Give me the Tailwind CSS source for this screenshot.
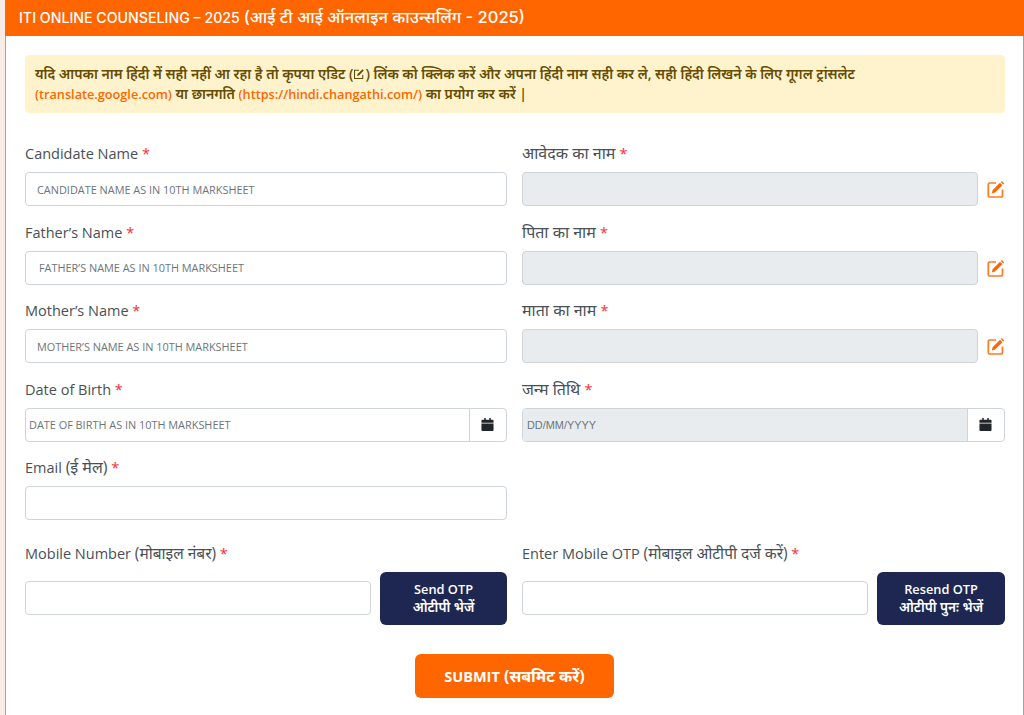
<!DOCTYPE html>
<html lang="hi">

<head>
    <meta charset="UTF-8">
    <title>ITI Online Counseling</title>
    <script src="https://cdn.jsdelivr.net/npm/@tailwindcss/browser@4"></script>
</head>

<body class="bg-[#f9ece4] h-[715px] overflow-hidden pl-[5px] font-['Open_Sans','Noto_Sans','Noto_Sans_Devanagari',sans-serif]">
    <div class="bg-white border-x border-[#ff8a3d] h-[715px]">
        <div class="bg-[#ff6600] h-[36px] -mx-px pl-[14px] pb-[1px] flex items-center text-white text-[14.2px] font-medium font-['Inter','Noto_Sans',sans-serif] whitespace-pre">ITI ONLINE COUNSELING – 2025 <span class="text-[16.5px]">(आई टी आई ऑनलाइन काउन्सलिंग - 2025)</span></div>

        <div class="pl-[19px] pr-[18px] pt-[19px]">
            <div class="bg-[#fff3cd] rounded h-[58px] px-[10px] pt-[9px] text-[14px] leading-[20px] font-semibold text-[#664d03]">
                <div class="h-[20px] whitespace-nowrap">यदि आपका नाम हिंदी में सही नहीं आ रहा है तो कृपया एडिट (<svg class="inline w-3 h-3 align-[-1px]" viewBox="0 0 16 16" fill="none" stroke="#664d03" stroke-width="1.4"><path d="M13 9v5H2V3h6"/><path d="M5.5 10.5l.6-2.4L12.6 1.6l1.8 1.8-6.5 6.5z" fill="#664d03" stroke="none"/></svg>) लिंक को क्लिक करें और अपना हिंदी नाम सही कर ले, सही हिंदी लिखने के लिए गूगल ट्रांसलेट</div>
                <div class="h-[20px] whitespace-nowrap"><span class="text-[#ff6600] text-[12.7px]">(translate.google.com)</span> या छानगति <span class="text-[#ff6600] text-[12.7px]">(https://hindi.changathi.com/)</span> का प्रयोग कर करें |</div>
            </div>

            <div class="grid grid-cols-[482px_483px] gap-x-[15px] mt-[28px]">
                <!-- name rows -->
                <div class="h-[78.5px]">
                    <label class="block text-[14.5px] leading-[24px] text-[#495057] h-[31px] pt-[1px]">Candidate Name <span class="text-red-500">*</span></label>
                    <div class="border border-[#ced4da] rounded h-[34px] flex items-center pl-[11px] pt-[2px] text-[10.9px] text-[#6c757d]">CANDIDATE NAME AS IN 10TH MARKSHEET</div>
                </div>
                <div class="h-[78.5px]">
                    <label class="block text-[16px] leading-[24px] text-[#495057] h-[31px]">आवेदक का नाम <span class="text-red-500 text-[14.5px]">*</span></label>
                    <div class="flex items-center">
                        <div class="bg-[#e9ecef] border border-[#ced4da] rounded h-[34px] w-[456px]"></div>
                        <svg class="ml-[9px] w-[18px] h-[18px]" viewBox="0 0 18 18" fill="none"><path d="M15.5 9.5v6a1.5 1.5 0 0 1-1.5 1.5H2.8a1.5 1.5 0 0 1-1.5-1.5V4.5A1.5 1.5 0 0 1 2.8 3H9" stroke="#ff7a20" stroke-width="1.7"/><path d="M4.8 13.4l.8-3.2 7.4-7.4 2.4 2.4-7.4 7.4zM13.8 2l1-1 2.4 2.4-1 1z" fill="#ff6600"/></svg>
                    </div>
                </div>

                <div class="h-[78.5px]">
                    <label class="block text-[14.5px] leading-[24px] text-[#495057] h-[31px] pt-[1px]">Father’s Name <span class="text-red-500">*</span></label>
                    <div class="border border-[#ced4da] rounded h-[34px] flex items-center pl-[13px] pt-[2px] text-[10.9px] text-[#6c757d]">FATHER’S NAME AS IN 10TH MARKSHEET</div>
                </div>
                <div class="h-[78.5px]">
                    <label class="block text-[16px] leading-[24px] text-[#495057] h-[31px]">पिता का नाम <span class="text-red-500 text-[14.5px]">*</span></label>
                    <div class="flex items-center">
                        <div class="bg-[#e9ecef] border border-[#ced4da] rounded h-[34px] w-[456px]"></div>
                        <svg class="ml-[9px] w-[18px] h-[18px]" viewBox="0 0 18 18" fill="none"><path d="M15.5 9.5v6a1.5 1.5 0 0 1-1.5 1.5H2.8a1.5 1.5 0 0 1-1.5-1.5V4.5A1.5 1.5 0 0 1 2.8 3H9" stroke="#ff7a20" stroke-width="1.7"/><path d="M4.8 13.4l.8-3.2 7.4-7.4 2.4 2.4-7.4 7.4zM13.8 2l1-1 2.4 2.4-1 1z" fill="#ff6600"/></svg>
                    </div>
                </div>

                <div class="h-[78.5px]">
                    <label class="block text-[14.5px] leading-[24px] text-[#495057] h-[31px] pt-[1px]">Mother’s Name <span class="text-red-500">*</span></label>
                    <div class="border border-[#ced4da] rounded h-[34px] flex items-center pl-[11px] pt-[2px] text-[10.9px] text-[#6c757d]">MOTHER’S NAME AS IN 10TH MARKSHEET</div>
                </div>
                <div class="h-[78.5px]">
                    <label class="block text-[16px] leading-[24px] text-[#495057] h-[31px]">माता का नाम <span class="text-red-500 text-[14.5px]">*</span></label>
                    <div class="flex items-center">
                        <div class="bg-[#e9ecef] border border-[#ced4da] rounded h-[34px] w-[456px]"></div>
                        <svg class="ml-[9px] w-[18px] h-[18px]" viewBox="0 0 18 18" fill="none"><path d="M15.5 9.5v6a1.5 1.5 0 0 1-1.5 1.5H2.8a1.5 1.5 0 0 1-1.5-1.5V4.5A1.5 1.5 0 0 1 2.8 3H9" stroke="#ff7a20" stroke-width="1.7"/><path d="M4.8 13.4l.8-3.2 7.4-7.4 2.4 2.4-7.4 7.4zM13.8 2l1-1 2.4 2.4-1 1z" fill="#ff6600"/></svg>
                    </div>
                </div>

                <!-- date of birth -->
                <div class="h-[78.5px]">
                    <label class="block text-[14.5px] leading-[24px] text-[#495057] h-[31px] pt-[1px]">Date of Birth <span class="text-red-500">*</span></label>
                    <div class="flex h-[34px] border border-[#ced4da] rounded">
                        <div class="flex-1 flex items-center pl-[3px] pt-[2px] text-[10.9px] text-[#6c757d]">DATE OF BIRTH AS IN 10TH MARKSHEET</div>
                        <div class="w-[37px] border-l border-[#ced4da] flex items-center justify-center pr-[1px]">
                            <svg class="w-[13px] h-[13px]" viewBox="0 0 13 14" fill="#212529"><path d="M3 0h1.6v2H8.4V0H10v2h2a1 1 0 0 1 1 1v2H0V3a1 1 0 0 1 1-1h2zM0 6h13v7a1 1 0 0 1-1 1H1a1 1 0 0 1-1-1z"/></svg>
                        </div>
                    </div>
                </div>
                <div class="h-[78.5px]">
                    <label class="block text-[16px] leading-[24px] text-[#495057] h-[31px]">जन्म तिथि <span class="text-red-500 text-[14.5px]">*</span></label>
                    <div class="flex h-[34px] border border-[#ced4da] rounded">
                        <div class="flex-1 bg-[#e9ecef] rounded-l flex items-center pl-[4px] pt-[2px] text-[10.9px] text-[#6c757d] font-['Liberation_Sans',sans-serif]">DD/MM/YYYY</div>
                        <div class="w-[37px] border-l border-[#ced4da] flex items-center justify-center pr-[1px]">
                            <svg class="w-[13px] h-[13px]" viewBox="0 0 13 14" fill="#212529"><path d="M3 0h1.6v2H8.4V0H10v2h2a1 1 0 0 1 1 1v2H0V3a1 1 0 0 1 1-1h2zM0 6h13v7a1 1 0 0 1-1 1H1a1 1 0 0 1-1-1z"/></svg>
                        </div>
                    </div>
                </div>

                <!-- email -->
                <div class="h-[85.5px]">
                    <label class="block text-[14.5px] leading-[24px] text-[#495057] h-[31px]">Email <span class="text-[16px]">(ई मेल)</span> <span class="text-red-500">*</span></label>
                    <div class="border border-[#ced4da] rounded h-[34px]"></div>
                </div>
                <div class="h-[85.5px]"></div>

                <!-- mobile + otp -->
                <div>
                    <label class="block text-[14.5px] leading-[24px] text-[#495057] h-[31px]">Mobile Number <span class="text-[15.5px]">(मोबाइल नंबर)</span> <span class="text-red-500">*</span></label>
                    <div class="flex items-center justify-between">
                        <div class="border border-[#ced4da] rounded h-[34px] w-[346px]"></div>
                        <button class="bg-[#1e2752] text-white rounded-md w-[127px] h-[53px] text-[13.5px] leading-[18px] font-semibold"><span class="text-[12.8px]">Send OTP</span><br>ओटीपी भेजें</button>
                    </div>
                </div>
                <div>
                    <label class="block text-[14.5px] leading-[24px] text-[#495057] h-[31px]">Enter Mobile OTP <span class="text-[15.5px]">(मोबाइल ओटीपी दर्ज करें)</span> <span class="text-red-500">*</span></label>
                    <div class="flex items-center justify-between">
                        <div class="border border-[#ced4da] rounded h-[34px] w-[346px]"></div>
                        <button class="bg-[#1e2752] text-white rounded-md w-[128px] h-[53px] text-[13.5px] leading-[18px] font-semibold"><span class="text-[12.8px]">Resend OTP</span><br>ओटीपी पुनः भेजें</button>
                    </div>
                </div>
            </div>

            <div class="flex justify-center mt-[29px] pr-[1px]">
                <button class="bg-[#ff6600] text-white rounded-md w-[199px] h-[44px] text-[16px] font-bold"><span class="text-[14.5px]">SUBMIT</span> (सबमिट करें)</button>
            </div>
        </div>
    </div>
</body>

</html>
